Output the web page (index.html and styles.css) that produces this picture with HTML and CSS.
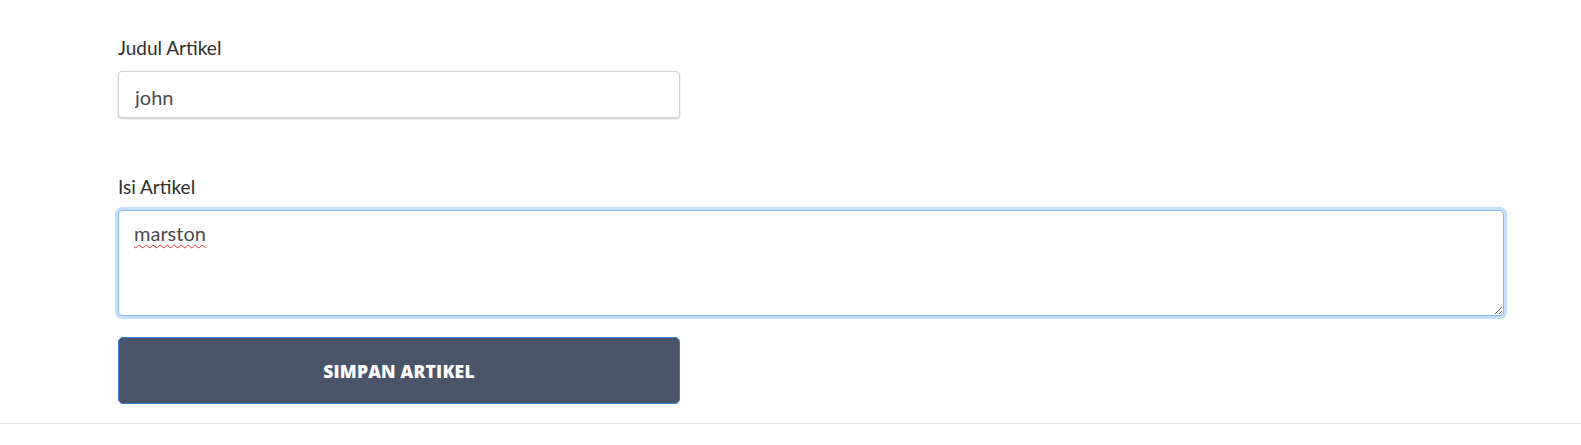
FILE: index.html
```html
<!DOCTYPE html>
<html lang="id">
<head>
<meta charset="utf-8">
<title>Artikel</title>
<link rel="stylesheet" href="styles.css">
</head>
<body>
<main class="page">
  <form class="form">
    <div class="field">
      <label class="label" for="judul">Judul Artikel</label>
      <input class="input" id="judul" type="text" value="john">
    </div>
    <div class="field field-isi">
      <label class="label" for="isi">Isi Artikel</label>
      <textarea class="textarea" id="isi">marston</textarea>
    </div>
    <button class="btn" type="button">SIMPAN ARTIKEL</button>
  </form>
  <div class="divider"></div>
</main>
</body>
</html>
```

FILE: styles.css
```css
* { box-sizing: border-box; }
html, body { margin: 0; padding: 0; background: #ffffff; }
body {
  font-family: "Lato", "Liberation Sans", sans-serif;
  color: #333333;
}
.page { padding-top: 37px; }
.form {
  display: flex;
  flex-direction: column;
  padding: 0 77px 0 118px;
}
.field { display: flex; flex-direction: column; }
.field-isi { margin-top: 58px; }
.label {
  font-size: 19px;
  line-height: 22px;
  color: #2e2e2e;
  margin-bottom: 12px;
}
.field-isi .label { margin-bottom: 12px; }
.input {
  width: 562px;
  height: 47px;
  border: 1px solid #d2d2d2;
  border-radius: 4px;
  box-shadow: 0 1px 2px rgba(0,0,0,0.22);
  padding: 4px 16px 0;
  font-family: inherit;
  font-size: 20px;
  color: #4a4a4a;
  outline: none;
}
.textarea {
  width: 100%;
  height: 106px;
  border: 1px solid #8ab9ea;
  border-radius: 4px;
  box-shadow: 0 0 0 3px #c4dffa;
  padding: 10px 15px;
  font-family: inherit;
  font-size: 20px;
  line-height: 24px;
  color: #4a4a4a;
  outline: none;
  resize: vertical;
  text-decoration: underline wavy #e03030;
  text-decoration-thickness: 1px;
  text-underline-offset: 3px;
}
.btn {
  margin-top: 21px;
  width: 562px;
  height: 67px;
  background: #4b5569;
  border: 1px solid #3a7bd5;
  border-radius: 5px;
  color: #ffffff;
  font-family: "Open Sans", "Liberation Sans", sans-serif;
  font-weight: 800;
  font-size: 17.5px;
  letter-spacing: 0.2px;
  cursor: pointer;
}
.divider {
  margin-top: 19px;
  height: 1px;
  background: #e3e3e3;
}
```
